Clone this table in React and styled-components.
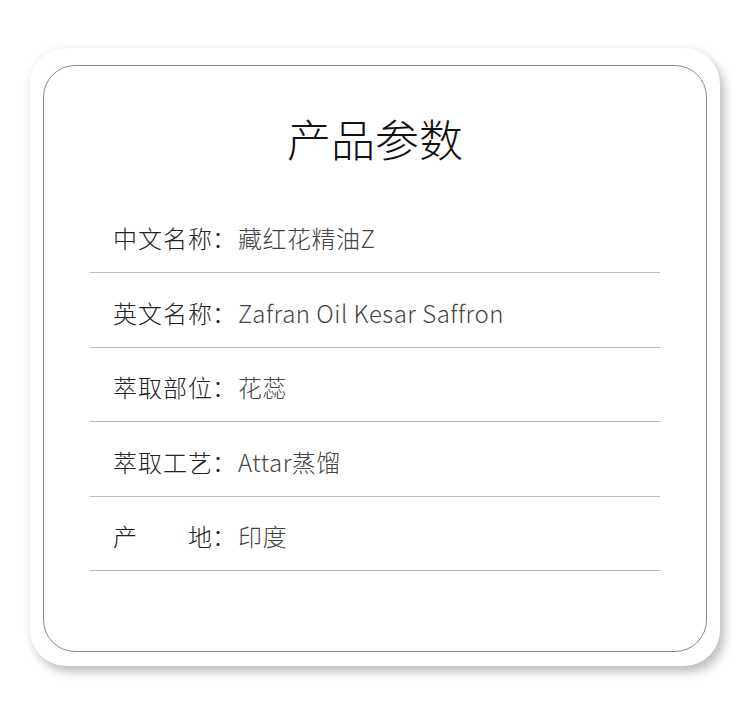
import React from 'react';
import styled, { createGlobalStyle } from 'styled-components';

const GlobalStyle = createGlobalStyle`
  body {
    margin: 0;
    background: #fff;
    font-family: "Noto Sans CJK SC", "Noto Sans", sans-serif;
  }
`;

const Page = styled.div`
  width: 750px;
  height: 721px;
  padding: 48px 30px 0;
  box-sizing: border-box;
`;

const OuterCard = styled.div`
  height: 618px;
  background: #fff;
  border-radius: 36px;
  padding: 17px 13px 14px;
  box-sizing: border-box;
  box-shadow: 0 0 8px rgba(0,0,0,0.07), 5px 7px 10px rgba(0,0,0,0.22);
`;

const InnerCard = styled.div`
  height: 100%;
  box-sizing: border-box;
  border: 1px solid #8a8a8a;
  border-radius: 32px;
  padding: 50px 46px 0;
`;

const Title = styled.h1`
  margin: 0;
  font-size: 44px;
  line-height: 44px;
  font-weight: 300;
  color: #111;
  text-align: center;
`;

const List = styled.div`
  margin-top: 38.5px;
`;

const Row = styled.div`
  display: flex;
  align-items: center;
  height: 74.5px;
  box-sizing: border-box;
  padding: 6px 0 0 23px;
  border-bottom: 1px solid #bdbdbd;
  font-size: 24px;
  line-height: 24px;
  font-weight: 300;
`;

const Label = styled.span`
  display: inline-block;
  width: 99px;
  color: #222;
  text-align: justify;
  text-align-last: justify;
`;

const Colon = styled.span`
  color: #222;
  width: 26px;
`;

const Value = styled.span`
  color: #444;
  font-weight: 200;
  letter-spacing: 0.5px;
`;

const PARAMS = [
  { label: '中文名称', value: '藏红花精油Z' },
  { label: '英文名称', value: 'Zafran Oil Kesar Saffron' },
  { label: '萃取部位', value: '花蕊' },
  { label: '萃取工艺', value: 'Attar蒸馏' },
  { label: '产地', value: '印度' },
];

export default function App() {
  return (
    <>
      <GlobalStyle />
      <Page>
        <OuterCard>
          <InnerCard>
            <Title>产品参数</Title>
            <List>
              {PARAMS.map(p => (
                <Row key={p.label}>
                  <Label>{p.label}</Label>
                  <Colon>：</Colon>
                  <Value>{p.value}</Value>
                </Row>
              ))}
            </List>
          </InnerCard>
        </OuterCard>
      </Page>
    </>
  );
}
